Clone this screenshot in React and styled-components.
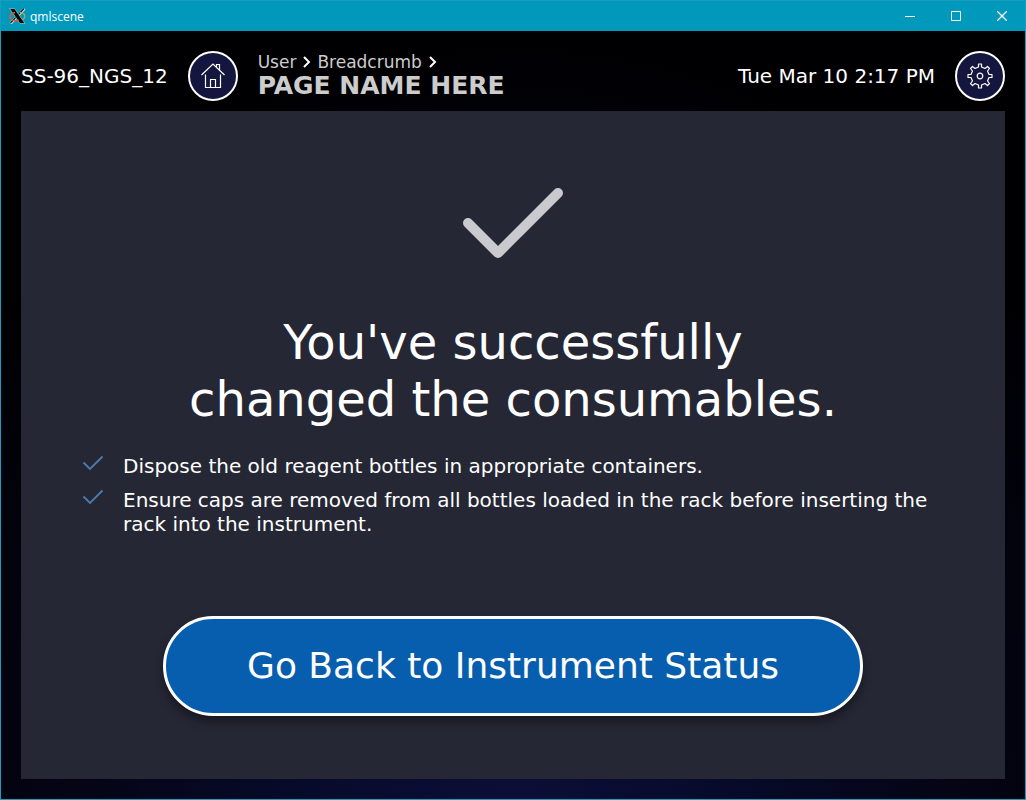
import React from "react"
import styled, { createGlobalStyle, css } from "styled-components"

const GlobalStyle = createGlobalStyle`
	* {
		box-sizing: border-box;
	}

	body {
		margin: 0;
		background: #000;
		font-family: "DejaVu Sans", sans-serif;
	}
`

const Window = styled.div`
	min-height: 100vh;
	display: flex;
	flex-direction: column;
	border: solid 1px #1a9cbc;
	color: #fff;
	background: radial-gradient(ellipse 65% 95% at 50% 100%, #0c0e38 0%, #070b2b 30%, #06061c 55%, #02030d 80%, #000002 100%);
`

const TitleBar = styled.div`
	height: 30px;
	display: flex;
	align-items: center;
	padding-left: 8px;
	background: #0099bc;
	font-family: "Open Sans", sans-serif;
	font-size: 12px;

	> span {
		flex: 1;
		margin-left: 4px;
	}
`

const WindowButton = styled.button`
	width: 46px;
	height: 30px;
	padding: 0;
	border: 0;
	display: flex;
	align-items: center;
	justify-content: center;
	color: inherit;
	background: transparent;
`

const Header = styled.header`
	height: 80px;
	padding: 10px 20px 0;
	display: flex;
	align-items: center;
	gap: 20px;
	font-size: 20px;
	line-height: 24px;
	white-space: nowrap;
`

const RoundButton = styled.button`
	width: 50px;
	height: 50px;
	padding: 0;
	flex-shrink: 0;
	display: flex;
	align-items: center;
	justify-content: center;
	border: solid 2px #fff;
	border-radius: 50%;
	color: #fff;
	background: #14163f;
	cursor: pointer;
`

const PageInfo = styled.div`
	flex: 1;
	color: #ccc;
`

const Breadcrumbs = styled.nav`
	display: flex;
	align-items: center;
	gap: 6px;
	font-size: 17px;
	line-height: 20px;

	a {
		color: inherit;
		text-decoration: none;
	}
`

const PageName = styled.h1`
	margin: 0;
	font-size: 25px;
	line-height: 28px;
`

const Panel = styled.main`
	flex: 1;
	margin: 0 20px 20px;
	padding: 76px 60px 63px;
	display: flex;
	flex-direction: column;
	align-items: center;
	background: #252735;
`

const Title = styled.h2`
	max-width: 660px;
	margin: 55px 0 26px;
	font-size: 48px;
	font-weight: normal;
	line-height: 57px;
	text-align: center;
`

const Notes = styled.ul`
	width: 100%;
	margin: 0 0 40px;
	padding: 0;
	display: flex;
	flex-direction: column;
	gap: 10px;
	list-style: none;
	font-size: 20px;
	line-height: 24px;
`

const Note = styled.li`
	display: flex;
	align-items: flex-start;
	gap: 18px;
`

const MainButton = styled.button`
	width: 100%;
	max-width: 700px;
	height: 100px;
	margin-top: auto;
	padding: 0 20px 2px;
	border: solid 3px #fff;
	border-radius: 50px;
	font-family: inherit;
	font-size: 36px;
	color: #fff;
	background: #085eae;
	box-shadow: 0 6px 10px rgba(0, 0, 0, .4);
	cursor: pointer;
`

const Icon = styled.svg`
	display: block;
	flex-shrink: 0;
	fill: none;
	stroke: currentColor;

	${props => props.$tone && css`
		color: ${props.$tone};
	`}
`

const AppLogo = () => (
	<Icon width={17} height={16} viewBox="0 0 17 16" aria-hidden="true">
		<path d="M15.5 .5L1.5 15.5" stroke="#cfe6ec" strokeWidth="2.6" />
		<path d="M15 .5L1.5 15" stroke="#111" strokeWidth="1.2" />
		<path d="M.5 .5H5.5L16 15.5H11z" fill="#050505" stroke="#b9dce6" strokeWidth=".6" />
		<path d="M6 4.5C1 5.500 -.5 9 2.500 11.500c2 1.500 5 1.500 7 .5" stroke="#d8602c" strokeWidth="1.400" />
		<path d="M11 4.500c5 .5 6.500 4 3 7" stroke="#c9a545" strokeWidth="1.200" />
	</Icon>
)

const HomeIcon = () => (
	<Icon width={26} height={26} viewBox="0 0 26 26" strokeWidth="1.2" aria-hidden="true">
		<path d="M1.500 12L13 1l11.500 11" />
		<path d="M5.500 11.500v13h15v-13" />
		<path d="M10.500 24.500v-8h5v8" />
		<path d="M16.500 4V1.500h3V7" />
	</Icon>
)

const GearIcon = () => (
	<Icon width={26} height={26} viewBox="-13 -13 26 26" strokeWidth="1.2" strokeLinejoin="round" aria-hidden="true">
		<path d="M-1.500 -12H1.500V-9L5 -7.500L7.500 -9.500L9.500 -7.500L7.500 -5L9 -1.500H12V1.500H9L7.500 5L9.500 7.500L7.500 9.500L5 7.500L1.500 9V12H-1.500V9L-5 7.500L-7.500 9.500L-9.500 7.500L-7.500 5L-9 1.500H-12V-1.500H-9L-7.500 -5L-9.500 -7.500L-7.500 -9.500L-5 -7.500L-1.500 -9z" />
		<circle r="2.800" />
	</Icon>
)

const Chevron = () => (
	<Icon width={9} height={12} viewBox="0 0 9 12" strokeWidth="2" $tone="#fff" aria-hidden="true">
		<path d="M2 1l5 5-5 5" />
	</Icon>
)

const BigCheck = () => (
	<Icon width={100} height={72} viewBox="0 0 100 72" strokeWidth="10" strokeLinecap="round" strokeLinejoin="round" $tone="#cacace" aria-hidden="true">
		<path d="M5 36l30 30L95 6" />
	</Icon>
)

const SmallCheck = () => (
	<Icon width={24} height={18} viewBox="0 0 24 18" strokeWidth="1.800" $tone="#4b7cac" aria-hidden="true">
		<path d="M2.500 8.500L9 15L21.500 2.500" />
	</Icon>
)

const crumbs = ["User", "Breadcrumb"]

const notes = [
	"Dispose the old reagent bottles in appropriate containers.",
	"Ensure caps are removed from all bottles loaded in the rack before inserting the rack into the instrument."
]

export default function App () {
	return <Window>
		<GlobalStyle />
		<TitleBar>
			<AppLogo />
			<span>qmlscene</span>
			<WindowButton aria-label="Minimize">
				<Icon width={10} height={10}><path d="M0 5.5h10" /></Icon>
			</WindowButton>
			<WindowButton aria-label="Maximize">
				<Icon width={10} height={10}><path d="M.5 .5h9v9h-9z" /></Icon>
			</WindowButton>
			<WindowButton aria-label="Close">
				<Icon width={10} height={10} strokeWidth="1.3"><path d="M0 0l10 10M10 0L0 10" /></Icon>
			</WindowButton>
		</TitleBar>
		<Header>
			<span>SS-96_NGS_12</span>
			<RoundButton aria-label="Home"><HomeIcon /></RoundButton>
			<PageInfo>
				<Breadcrumbs>
					{crumbs.map(text => (
						<React.Fragment key={text}>
							<a href="#">{text}</a>
							<Chevron />
						</React.Fragment>
					))}
				</Breadcrumbs>
				<PageName>PAGE NAME HERE</PageName>
			</PageInfo>
			<time>Tue Mar 10 2:17 PM</time>
			<RoundButton aria-label="Settings"><GearIcon /></RoundButton>
		</Header>
		<Panel>
			<BigCheck />
			<Title>You've successfully changed the consumables.</Title>
			<Notes>
				{notes.map(text => (
					<Note key={text}>
						<SmallCheck />
						<span>{text}</span>
					</Note>
				))}
			</Notes>
			<MainButton>Go Back to Instrument Status</MainButton>
		</Panel>
	</Window>
}
